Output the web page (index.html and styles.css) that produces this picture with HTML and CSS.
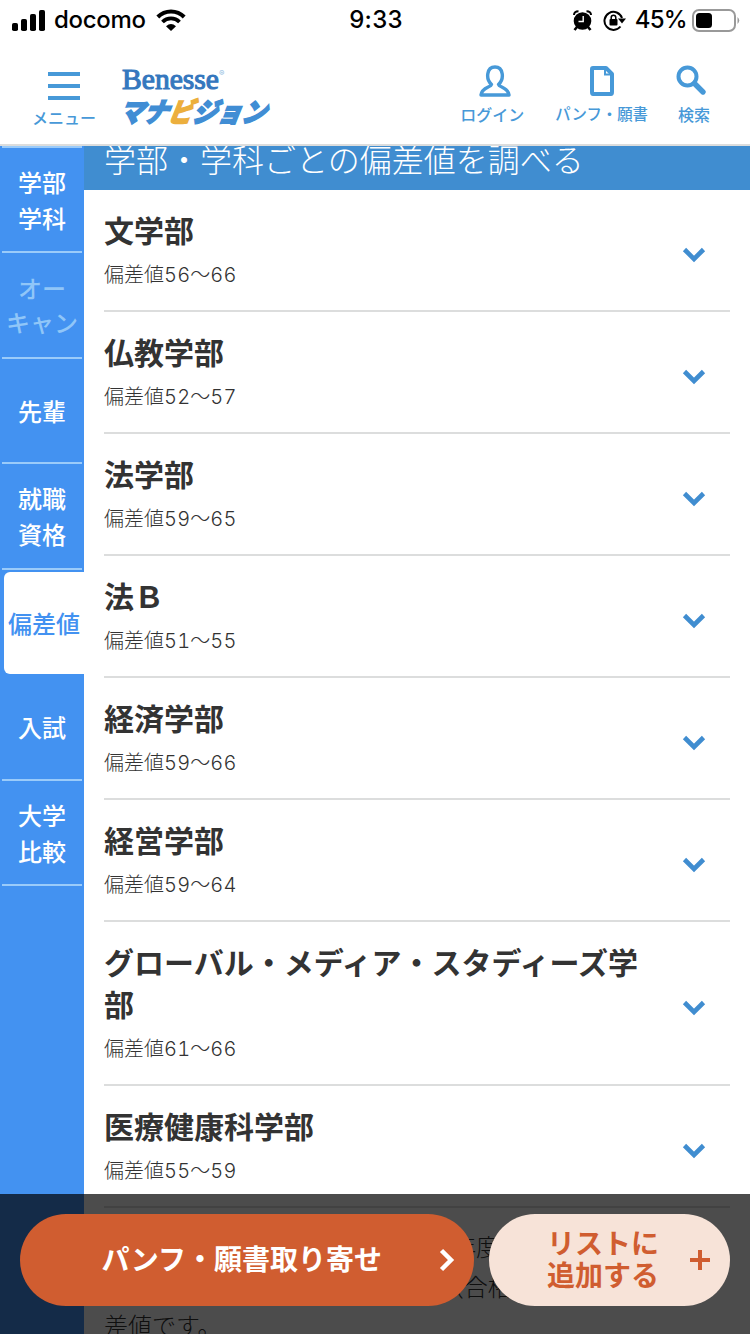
FILE: index.html
```html
<!DOCTYPE html>
<html lang="ja">

<head>
    <meta charset="UTF-8">
    <meta name="viewport" content="width=device-width, initial-scale=1.0">
    <title>偏差値 | Benesse マナビジョン</title>
    <link rel="stylesheet" href="styles.css">
</head>

<body>
    <!-- ステータスバー -->
    <div class="status">
        <div class="status-left">
            <svg width="33" height="21" viewBox="0 0 33 21">
                <rect x="0" y="13" width="6" height="8" rx="1.8" />
                <rect x="9" y="9" width="6" height="12" rx="1.8" />
                <rect x="18" y="4" width="6" height="17" rx="1.8" />
                <rect x="27" y="0" width="6" height="21" rx="1.8" />
            </svg>
            <span class="carrier">docomo</span>
            <svg class="wifi" width="30" height="22" viewBox="0 0 30 22">
                <path d="M1.8 8 A18.5 18.5 0 0 1 28.2 8" fill="none" stroke="#000" stroke-width="4" />
                <path d="M6.5 13 A12 12 0 0 1 23.5 13" fill="none" stroke="#000" stroke-width="3.8" />
                <path d="M10 17.2 Q15 13 20 17.2 L15 22 Z" />
            </svg>
        </div>
        <div class="time">9:33</div>
        <div class="status-right">
            <svg width="19" height="21" viewBox="0 0 19 21">
                <circle cx="9.5" cy="11" r="8.8" />
                <path d="M1 5 Q1 1.2 5.5 1.2 M18 5 Q18 1.2 13.5 1.2" fill="none" stroke="#000" stroke-width="2" />
                <path d="M4 17 L1.5 20 M15 17 L17.5 20" stroke="#000" stroke-width="2.6" />
                <path d="M10.200 6 V11.500 H5.500" fill="none" stroke="#fff" stroke-width="1.4" />
            </svg>
            <svg class="lock" width="23" height="21" viewBox="0 0 23 21">
                <path d="M17.5 16.5 A9 9 0 1 1 19 8" fill="none" stroke="#000" stroke-width="2" />
                <path d="M15 8.5 H23 L19 13.5 Z" />
                <rect x="6.5" y="9" width="8" height="6.5" rx="1" />
                <path d="M8.2 9.5 V7.5 A2.3 2.3 0 0 1 12.8 7.5 V9.5" fill="none" stroke="#000" stroke-width="1.5" />
            </svg>
            <span class="percent">45%</span>
            <svg width="48" height="23" viewBox="0 0 48 23">
                <rect x="1" y="1" width="42" height="21" rx="6" fill="none" stroke="#999" stroke-width="2" />
                <rect x="4" y="4" width="16" height="15" rx="3.5" />
                <path d="M45.5 8 Q49 11.5 45.5 15 Z" fill="#999" />
            </svg>
        </div>
    </div>

    <!-- ヘッダー -->
    <header class="header">
        <a class="nav nav-menu">
            <span class="bars"><i></i><i></i><i></i></span>
            <span>メニュー</span>
        </a>
        <svg class="logo" width="156" height="66" viewBox="0 0 156 66">
            <text class="logo-en" x="1" y="25" textLength="97" lengthAdjust="spacingAndGlyphs">Benesse</text>
            <text class="logo-r" x="98" y="12">®</text>
            <g transform="translate(-3 57.5) skewX(-22)">
                <text class="logo-ja" x="0" y="0" textLength="147" lengthAdjust="spacingAndGlyphs">マナ<tspan class="logo-bi">ビ</tspan>ジョン</text>
            </g>
        </svg>
        <a class="nav nav-login">
            <svg width="32" height="32" viewBox="0 0 32 32">
                <path d="M12.5 19.5 C6.5 14 7.5 2 16 2 C24.5 2 25.5 14 19.5 19.5 C20 22.5 29 22 30 30 H2 C3 22 12 22.5 12.5 19.5 Z" fill="none" stroke="currentColor" stroke-width="3.4" stroke-linejoin="round" />
            </svg>
            <span>ログイン</span>
        </a>
        <a class="nav nav-book">
            <svg width="24" height="32" viewBox="0 0 24 32">
                <path d="M2 4 Q2 3 3 3 H16 L22 9 V27 Q22 29 21 29 H3 Q2 29 2 27 Z" fill="none" stroke="currentColor" stroke-width="4" stroke-linejoin="round" />
                <path d="M15 3 V9.5 H22" fill="none" stroke="currentColor" stroke-width="2" />
            </svg>
            <span>パンフ・願書</span>
        </a>
        <a class="nav nav-search">
            <svg width="32" height="32" viewBox="0 0 32 32">
                <circle cx="11.5" cy="11.5" r="9" fill="none" stroke="currentColor" stroke-width="4" />
                <path d="M18.500 18.500 L27 27" stroke="currentColor" stroke-width="5.4" stroke-linecap="round" />
            </svg>
            <span>検索</span>
        </a>
    </header>

    <div class="main">
        <!-- サイドメニュー -->
        <nav class="side">
            <a class="side-item">学部<br>学科</a>
            <a class="side-item off">オー<br>キャン</a>
            <a class="side-item">先輩</a>
            <a class="side-item">就職<br>資格</a>
            <a class="side-item active">偏差値</a>
            <a class="side-item">入試</a>
            <a class="side-item">大学<br>比較</a>
        </nav>

        <!-- 学部一覧 -->
        <div class="content">
            <h2 class="heading">学部・学科ごとの偏差値を調べる</h2>
            <ul class="list">
                <li class="row">
                    <div>
                        <h3>文学部</h3>
                        <p>偏差値<span>56</span>〜<span>66</span></p>
                    </div>
                    <svg class="chevron" viewBox="0 0 24 16"><path d="M2.5 2.5 L12 12 L21.5 2.5" /></svg>
                </li>
                <li class="row">
                    <div>
                        <h3>仏教学部</h3>
                        <p>偏差値<span>52</span>〜<span>57</span></p>
                    </div>
                    <svg class="chevron" viewBox="0 0 24 16"><path d="M2.5 2.5 L12 12 L21.5 2.5" /></svg>
                </li>
                <li class="row">
                    <div>
                        <h3>法学部</h3>
                        <p>偏差値<span>59</span>〜<span>65</span></p>
                    </div>
                    <svg class="chevron" viewBox="0 0 24 16"><path d="M2.5 2.5 L12 12 L21.5 2.5" /></svg>
                </li>
                <li class="row">
                    <div>
                        <h3>法Ｂ</h3>
                        <p>偏差値<span>51</span>〜<span>55</span></p>
                    </div>
                    <svg class="chevron" viewBox="0 0 24 16"><path d="M2.5 2.5 L12 12 L21.5 2.5" /></svg>
                </li>
                <li class="row">
                    <div>
                        <h3>経済学部</h3>
                        <p>偏差値<span>59</span>〜<span>66</span></p>
                    </div>
                    <svg class="chevron" viewBox="0 0 24 16"><path d="M2.5 2.5 L12 12 L21.5 2.5" /></svg>
                </li>
                <li class="row">
                    <div>
                        <h3>経営学部</h3>
                        <p>偏差値<span>59</span>〜<span>64</span></p>
                    </div>
                    <svg class="chevron" viewBox="0 0 24 16"><path d="M2.5 2.5 L12 12 L21.5 2.5" /></svg>
                </li>
                <li class="row">
                    <div>
                        <h3>グローバル・メディア・スタディーズ学部</h3>
                        <p>偏差値<span>61</span>〜<span>66</span></p>
                    </div>
                    <svg class="chevron" viewBox="0 0 24 16"><path d="M2.5 2.5 L12 12 L21.5 2.5" /></svg>
                </li>
                <li class="row">
                    <div>
                        <h3>医療健康科学部</h3>
                        <p>偏差値<span>55</span>〜<span>59</span></p>
                    </div>
                    <svg class="chevron" viewBox="0 0 24 16"><path d="M2.5 2.5 L12 12 L21.5 2.5" /></svg>
                </li>
            </ul>
            <p class="note">※掲載している偏差値は、<span>2020</span>年度<br>の総合学力記述模試・10月より（合格<br>差値です。</p>
        </div>
    </div>

    <!-- 下部固定ボタン -->
    <div class="bottom">
        <a class="btn btn-request">
            <span>パンフ・願書取り寄せ</span>
            <svg width="16" height="24" viewBox="0 0 16 24"><path d="M2.5 2.5 L12 12 L2.5 21.5" /></svg>
        </a>
        <a class="btn btn-list">
            <span>リストに<br>追加する</span>
            <svg width="20" height="20" viewBox="0 0 20 20"><path d="M10 0 V20 M0 10 H20" /></svg>
        </a>
    </div>
</body>

</html>
```
FILE: styles.css
```css
* {
    margin: 0;
    padding: 0;
    list-style: none;
    box-sizing: border-box;
}

body {
    width: 750px;
    height: 1334px;
    display: flex;
    flex-direction: column;
    position: relative;
    overflow: hidden;
    background: #fff;
    color: #333;
    font-family: Inter, "Noto Sans CJK JP", sans-serif;
}

svg {
    display: block;
    flex: none;
}

/* ステータスバー */
.status {
    height: 40px;
    padding: 0 10px 0 12px;
    display: grid;
    grid-template-columns: 1fr auto 1fr;
    align-items: center;
    color: #000;
    font-size: 24px;
    line-height: 40px;
}

.status-left,
.status-right {
    display: flex;
    align-items: center;
}

.status-right {
    justify-content: flex-end;
}

.carrier {
    margin: 0 10px 0 9px;
    letter-spacing: -0.3px;
}

.time {
    font-weight: 500;
    letter-spacing: 0.3px;
}

.lock {
    margin: 0 9px 0 11px;
}

.percent {
    margin-right: 5px;
    letter-spacing: -0.7px;
}

.carrier,
.percent {
    font-weight: 500;
}

/* ヘッダー */
.header {
    height: 106px;
    padding: 24px 40px 0 32px;
    display: flex;
    align-items: flex-start;
    border-bottom: 2px solid #dcdddd;
    color: #4799d8;
}

.nav {
    display: flex;
    flex-direction: column;
    align-items: center;
    font-size: 16px;
    font-weight: 500;
    line-height: 24px;
    white-space: nowrap;
}

.nav svg {
    margin: 1px 0 6px;
}

.bars {
    height: 28px;
    margin: 8px 0 6px;
    display: flex;
    flex-direction: column;
    justify-content: space-between;
}

.bars i {
    width: 32px;
    height: 4px;
    background: #4799d8;
}

.logo {
    margin-left: 25px;
}

.logo-en {
    font-family: "Liberation Serif", serif;
    font-size: 29px;
    fill: #3577be;
    stroke: #3577be;
    stroke-width: 1.1px;
}

.logo-r {
    font-size: 8px;
    fill: #8fb9e0;
}

.logo-ja {
    font-size: 27px;
    font-weight: 900;
    fill: #408dd4;
    stroke: #408dd4;
    stroke-width: 1.6px;
}

.logo-bi {
    fill: #ecaf3d;
    stroke: #ecaf3d;
}

.nav-login {
    margin-left: auto;
}

.nav-login svg {
    margin-left: 6px;
}

.nav-book {
    margin-left: 31px;
    font-size: 15.4px;
}

.nav-search {
    width: 32px;
    margin-left: 30px;
}

.nav-search svg {
    margin-right: 2px;
    margin-left: -2px;
}

/* メイン */
.main {
    flex: 1;
    min-height: 0;
    display: flex;
    overflow: hidden;
}

.side {
    width: 84px;
    padding: 0 2px;
    flex: none;
    background: #4392f1;
}

.side-item {
    height: 105.5px;
    padding-top: 4px;
    display: flex;
    justify-content: center;
    align-items: center;
    border-bottom: 2px solid #9acbfa;
    color: #fff;
    font-size: 24px;
    font-weight: 500;
    line-height: 36px;
    text-align: center;
    white-space: nowrap;
}

.side-item:first-child {
    height: 107.4px;
    border-top: 2px solid #9acbfa;
}

.off {
    color: #90c6f8;
    line-height: 34px;
}

.active {
    height: 102px;
    margin: 2px -2px 1.5px 2px;
    border: 0;
    border-radius: 6px 0 0 6px;
    background: #fff;
    color: #4392f1;
}

.content {
    flex: 1;
    min-width: 0;
}

.heading {
    height: 44px;
    padding: 0 20px;
    background: #408dd0;
    color: #fff;
    font-size: 32px;
    font-weight: 300;
    line-height: 29px;
    overflow: hidden;
}

.list {
    padding: 0 20px;
}

.row {
    padding: 20px 24px 20px 0;
    display: flex;
    justify-content: space-between;
    align-items: center;
    border-bottom: 2px solid #dcdddd;
}

.row div {
    width: 552px;
}

.row h3 {
    font-size: 30px;
    font-weight: bold;
    line-height: 42px;
}

.row p {
    margin-top: 8px;
    font-size: 20px;
    font-weight: 300;
    line-height: 30px;
}

/* 数字は等幅 */
.row p span {
    font-variant-numeric: tabular-nums;
    letter-spacing: 0.2px;
}

.chevron {
    width: 24px;
    height: 16px;
    margin-top: 10px;
}

.chevron path {
    fill: none;
    stroke: #408dd0;
    stroke-width: 4.6;
}

.note {
    padding: 20px 20px 0;
    font-size: 24px;
    font-weight: 300;
    line-height: 39.5px;
    white-space: nowrap;
}

.note span {
    letter-spacing: 3px;
}

/* 下部固定ボタン */
.bottom {
    width: 100%;
    height: 140px;
    padding: 20px;
    position: absolute;
    left: 0;
    bottom: 0;
    display: flex;
    gap: 15px;
    background: rgba(0, 0, 0, 0.7);
}

.btn {
    height: 92px;
    display: flex;
    align-items: center;
    justify-content: flex-end;
    border-radius: 46px;
    font-size: 28px;
    font-weight: bold;
}

.btn path {
    fill: none;
    stroke: currentColor;
    stroke-width: 4.5;
}

.btn-request {
    width: 454px;
    padding-right: 19px;
    gap: 57px;
    background: #d05d30;
    color: #fff;
    line-height: 42px;
}

.btn-request span {
    margin-top: -1px;
}

.btn-list {
    width: 241px;
    padding-right: 20px;
    gap: 31px;
    background: #f7e3d8;
    color: #d05d30;
    line-height: 32px;
    text-align: center;
}

.btn-list path {
    stroke-width: 4;
}
```
